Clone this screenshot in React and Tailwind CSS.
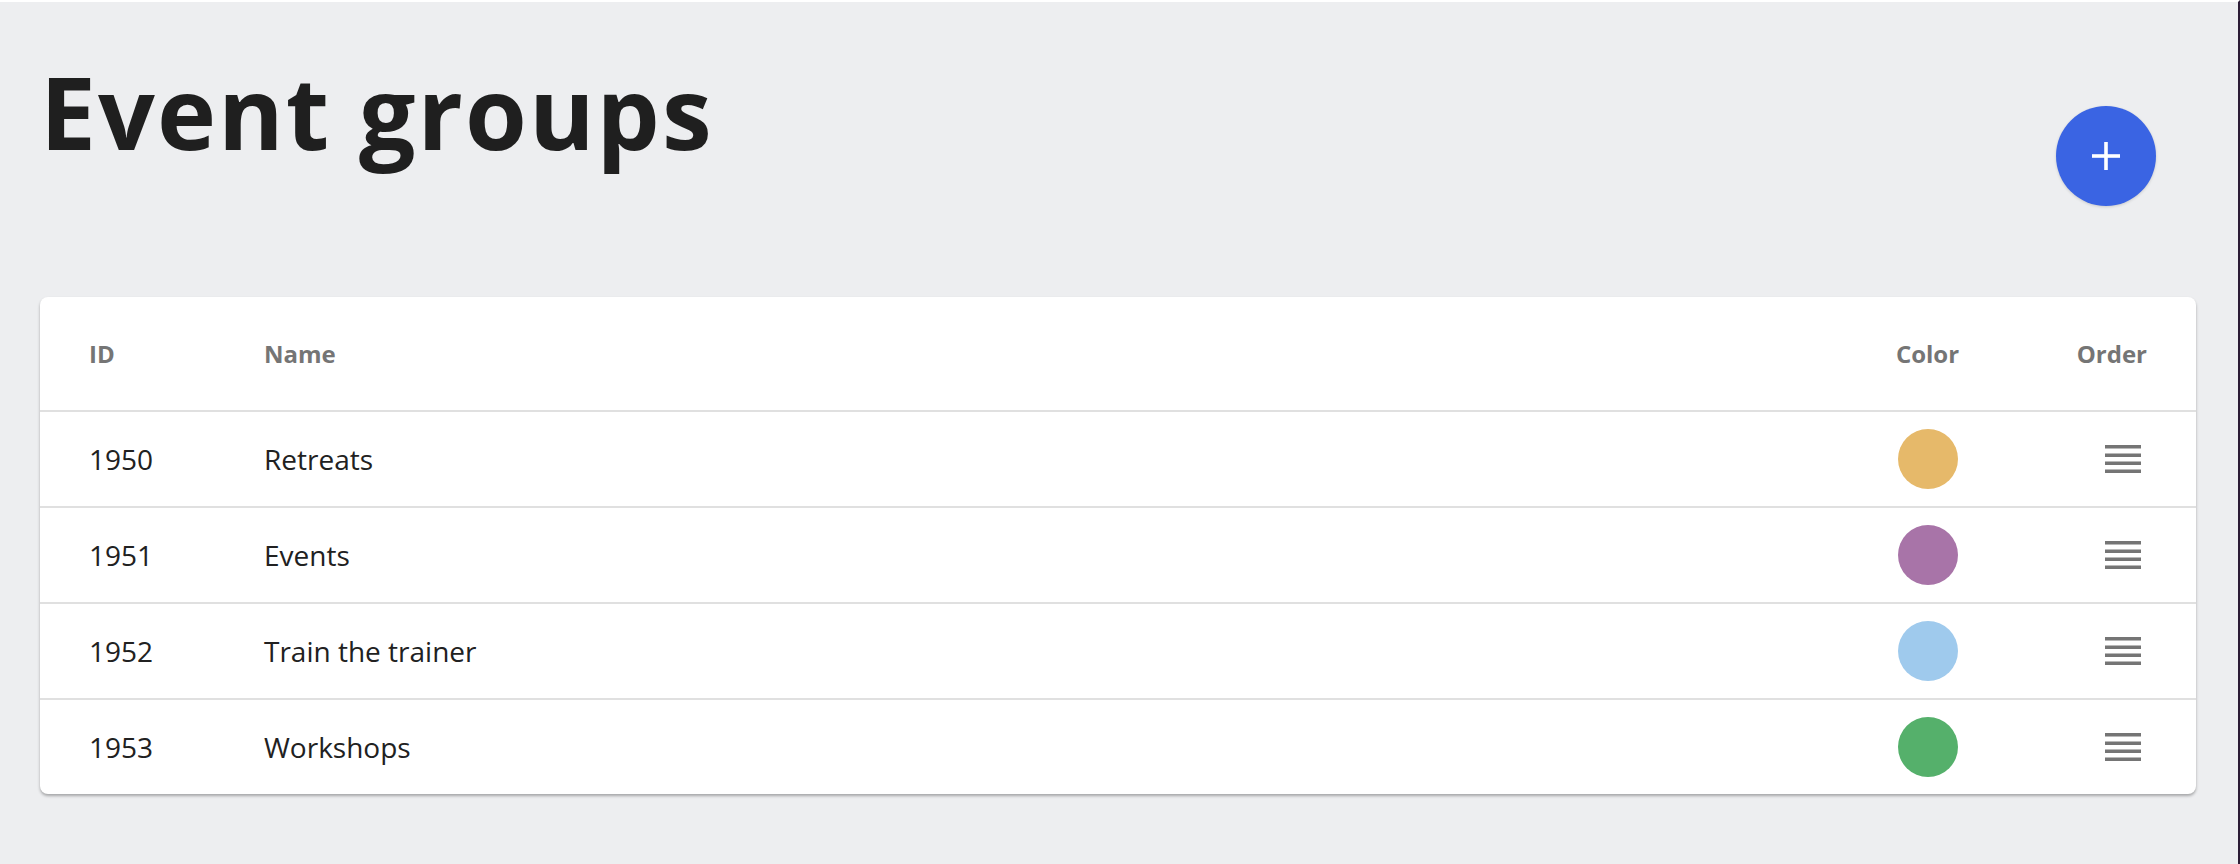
import React from 'react';

const groups = [
  { id: 1950, name: 'Retreats', color: 'bg-[#e6b96a]' },
  { id: 1951, name: 'Events', color: 'bg-[#a874a8]' },
  { id: 1952, name: 'Train the trainer', color: 'bg-[#9fcaed]' },
  { id: 1953, name: 'Workshops', color: 'bg-[#55b06b]' },
];

const ReorderIcon = () => (
  <svg viewBox="0 0 24 24" className="w-[48px] h-[48px]" fill="#757575">
    <path d="M3 15h18v-1.7H3V15zm0 4h18v-1.7H3V19zm0-8h18V9.3H3V11zm0-6v1.7h18V5H3z" />
  </svg>
);

const App = () => {
  return (
    <div
      className="min-h-screen w-full bg-[#edeef0] border-t-2 border-t-white border-r-2 border-r-[#2b1b35] pl-[40px] pr-[42px] pb-[60px] text-[#212121]"
      style={{ fontFamily: '"Open Sans", "Liberation Sans", sans-serif' }}
    >
      <div className="flex justify-between items-start pt-[59px]">
        <h1 className="text-[100px] leading-none font-bold tracking-[2px] text-[#1f1f1f]">Event groups</h1>
        <button className="mt-[45px] mr-[40px] w-[100px] h-[100px] rounded-full bg-[#3a64e3] flex items-center justify-center shadow-[0_1px_3px_rgba(0,0,0,0.15)]">
          <svg viewBox="0 0 28 28" className="w-[28px] h-[28px]" stroke="white" strokeWidth="3.6">
            <line x1="14" y1="0" x2="14" y2="28" />
            <line x1="0" y1="14" x2="28" y2="14" />
          </svg>
        </button>
      </div>

      <div className="mt-[91px] bg-white rounded-[8px] shadow-[0_2px_3px_rgba(0,0,0,0.3)] overflow-hidden">
        <div className="h-[113px] flex items-center px-[49px] text-[24px] font-bold text-[#757575]">
          <div className="w-[175px]">ID</div>
          <div className="flex-1">Name</div>
          <div className="w-[67px] text-center">Color</div>
          <div className="w-[113px]"></div>
          <div className="w-[73px] text-right">Order</div>
        </div>
        {groups.map(group => (
          <div key={group.id} className="h-[96px] border-t-2 border-[#e0e0e0] flex items-center px-[49px] text-[28px]">
            <div className="w-[175px]">{group.id}</div>
            <div className="flex-1">{group.name}</div>
            <div className="w-[67px] flex justify-center">
              <div className={`w-[60px] h-[60px] rounded-full ${group.color}`}></div>
            </div>
            <div className="w-[113px]"></div>
            <div className="w-[73px] flex justify-end">
              <ReorderIcon />
            </div>
          </div>
        ))}
      </div>
    </div>
  );
};

export default App;
